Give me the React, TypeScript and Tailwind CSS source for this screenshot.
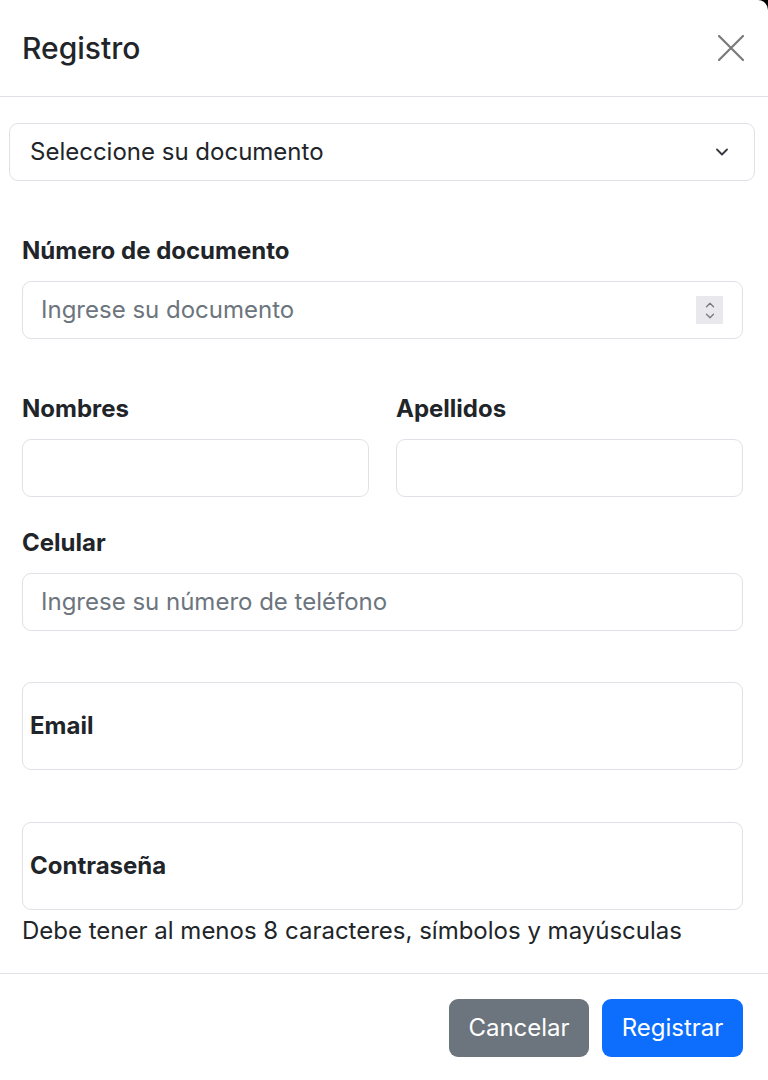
import { ChevronDown, ChevronUp } from "lucide-react";

const inputBox = "h-[58px] w-full rounded-[9px] border border-[#dee2e6] bg-white px-[18px] flex items-center";

function Label({ children }: { children: React.ReactNode }) {
  return <div className="mb-[12px] h-[36px] leading-[36px] font-bold text-[#212529]">{children}</div>;
}

export default function App() {
  return (
    <div className="min-h-[1080px] w-[768px] bg-black" style={{ fontFamily: "Inter, 'Noto Sans', sans-serif" }}>
      <div className="min-h-[1080px] w-[768px] rounded-tr-[10px] bg-white text-[24px] text-[#212529]">
        {/* header */}
        <div className="flex h-[97px] items-center justify-between border-b border-[#dee2e6] pl-[22px] pr-[24px]">
          <h5 className="text-[30px] font-medium leading-[45px]">Registro</h5>
          <svg width="26" height="26" viewBox="0 0 26 26" className="text-[#7a7a7a]">
            <path d="M1 1L25 25M25 1L1 25" stroke="currentColor" strokeWidth="2.2" strokeLinecap="round" />
          </svg>
        </div>

        {/* select */}
        <div className="pl-[9px] pr-[13px] pt-[26px]">
          <div className="flex h-[58px] items-center justify-between rounded-[9px] border border-[#dee2e6] pl-[20px] pr-[22px]">
            <span>Seleccione su documento</span>
            <ChevronDown className="h-[20px] w-[20px] text-[#343a40]" strokeWidth={2.2} />
          </div>
        </div>

        {/* body */}
        <div className="pl-[22px] pr-[25px] pb-[24px]">
          <div className="pt-[52px]">
            <Label>Número de documento</Label>
            <div className={`${inputBox} justify-between pr-[19px]`}>
              <span className="text-[#6c757d]">Ingrese su documento</span>
              <div className="flex h-[28px] w-[27px] flex-col items-center justify-center bg-[#e9e9ed]">
                <ChevronUp className="-mb-[3px] h-[14px] w-[14px] text-[#77777f]" strokeWidth={2.2} />
                <ChevronDown className="h-[14px] w-[14px] text-[#77777f]" strokeWidth={2.2} />
              </div>
            </div>
          </div>

          <div className="grid grid-cols-2 gap-[27px] pt-[52px]">
            <div>
              <Label>Nombres</Label>
              <div className={inputBox} />
            </div>
            <div>
              <Label>Apellidos</Label>
              <div className={inputBox} />
            </div>
          </div>

          <div className="pt-[28px]">
            <Label>Celular</Label>
            <div className={inputBox}>
              <span className="text-[#6c757d]">Ingrese su número de teléfono</span>
            </div>
          </div>

          <div className="pt-[51px]">
            <div className="flex h-[88px] items-center rounded-[9px] border border-[#dee2e6] pl-[7px]">
              <span className="font-bold">Email</span>
            </div>
          </div>

          <div className="pt-[52px]">
            <div className="flex h-[88px] items-center rounded-[9px] border border-[#dee2e6] pl-[7px]">
              <span className="font-bold">Contraseña</span>
            </div>
            <div className="mt-[3px] h-[36px] leading-[36px]">Debe tener al menos 8 caracteres, símbolos y mayúsculas</div>
          </div>
        </div>

        {/* footer */}
        <div className="flex justify-end gap-[13px] border-t border-[#dee2e6] pr-[25px] pt-[25px] pb-[23px]">
          <button className="h-[58px] w-[140px] rounded-[9px] bg-[#6c757d] text-white">Cancelar</button>
          <button className="h-[58px] w-[141px] rounded-[9px] bg-[#0d6efd] text-white">Registrar</button>
        </div>
      </div>
    </div>
  );
}
